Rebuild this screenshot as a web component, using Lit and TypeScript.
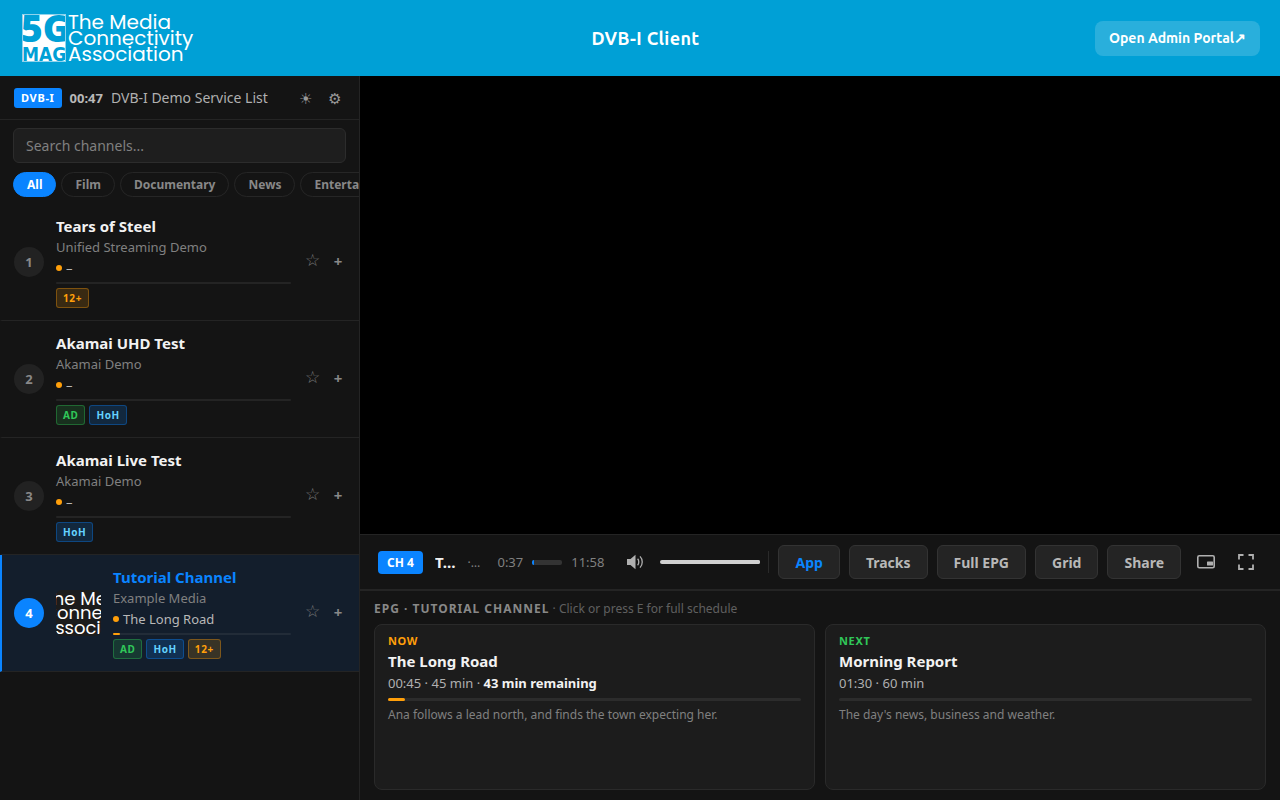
import { LitElement, html, css, nothing } from "lit";
import { customElement, property, state } from "lit/decorators.js";

interface Channel {
  num: number;
  name: string;
  provider: string;
  now: string;
  progress: number;
  tags: string[];
  logo?: boolean;
}

const CHANNELS: Channel[] = [
  { num: 1, name: "Tears of Steel", provider: "Unified Streaming Demo", now: "–", progress: 0, tags: ["12+"] },
  { num: 2, name: "Akamai UHD Test", provider: "Akamai Demo", now: "–", progress: 0, tags: ["AD", "HoH"] },
  { num: 3, name: "Akamai Live Test", provider: "Akamai Demo", now: "–", progress: 0, tags: ["HoH"] },
  { num: 4, name: "Tutorial Channel", provider: "Example Media", now: "The Long Road", progress: 4, tags: ["AD", "HoH", "12+"], logo: true },
];

const GENRES = ["All", "Film", "Documentary", "News", "Entertainment"];

const TAG_CLASS: Record<string, string> = { AD: "ad", HoH: "hoh", "12+": "age" };

@customElement("brand-logo")
class BrandLogo extends LitElement {
  static styles = css`
    :host { display: block; }
    svg { display: block; }
    .words { font-family: "Poppins", "Lato", sans-serif; font-size: 20px; fill: #fff; }
    .mark { font-family: "Open Sans", "Noto Sans", sans-serif; font-weight: 800; fill: #00a0d6; }
    .five { font-size: 37px; }
    .mag { font-family: "DejaVu Sans Condensed", "DejaVu Sans", sans-serif; font-weight: 700; font-size: 19px; }
  `;
  render() {
    return html`<svg width="176" height="50" viewBox="0 0 176 50" role="img" aria-label="5G-MAG The Media Connectivity Association">
      <rect x="2" y="1" width="44" height="48" fill="#fff" />
      <text class="mark five" x="1" y="29">5G</text>
      <text class="mark mag" x="2" y="48">MAG</text>
      <rect x="2.5" y="1.5" width="43" height="47" fill="none" stroke="#8fd3ec" />
      <text class="words" x="48" y="16">The Media</text>
      <text class="words" x="48" y="32">Connectivity</text>
      <text class="words" x="48" y="48">Association</text>
    </svg>`;
  }
}

@customElement("channel-row")
class ChannelRow extends LitElement {
  @property({ attribute: false }) channel!: Channel;
  @property({ type: Boolean }) selected = false;

  static styles = css`
    :host { display: block; }
    .row {
      display: flex; align-items: center; gap: 12px;
      padding: 12px 13px 12px 12px;
      border-left: 2px solid transparent;
      border-bottom: 1px solid #242424;
    }
    .row.on { background: #131e2c; border-left-color: #0a84ff; }
    .num {
      flex: none; width: 30px; height: 30px; border-radius: 50%;
      background: #222; color: #888; font-size: 13px; font-weight: 700;
      display: grid; place-items: center;
    }
    .on .num { background: #0a84ff; color: #fff; }
    .thumb { flex: none; width: 45px; height: 46px; border-radius: 6px; background: #1c1c1c; display: block; }
    .words { font-family: "Poppins", "Lato", sans-serif; font-size: 18px; fill: #fff; }
    .info { flex: 1; min-width: 0; }
    .name { font-size: 15px; font-weight: 700; line-height: 20px; color: #f2f2f2; }
    .on .name { color: #0a84ff; }
    .provider { font-size: 13px; line-height: 22px; color: #808080; }
    .now { display: flex; align-items: center; gap: 4px; font-size: 13px; line-height: 20px; color: #b8b8b8; }
    .dot { width: 6px; height: 6px; border-radius: 50%; background: #ff9f0a; }
    .track { height: 2px; margin: 4px 0; background: #242424; border-radius: 1px; }
    .on .track { background: #222c38; }
    .fill { height: 2px; background: #ff9f0a; border-radius: 1px; }
    .tags { display: flex; gap: 4px; }
    .tag {
      font-size: 10px; font-weight: 700; line-height: 18px; letter-spacing: 0.06em;
      padding: 0 6px; border: 1px solid; border-radius: 3px;
    }
    .ad { color: #30c759; background: rgba(48, 209, 88, 0.15); border-color: rgba(48, 209, 88, 0.35); }
    .hoh { color: #64d2ff; background: rgba(10, 132, 255, 0.18); border-color: rgba(10, 132, 255, 0.35); }
    .age { color: #ff9f0a; background: rgba(255, 159, 10, 0.16); border-color: rgba(255, 159, 10, 0.35); }
    .acts { display: flex; align-items: center; gap: 8px; }
    button {
      font: inherit; background: none; border: 0; padding: 0 0 2px; color: #777; cursor: pointer;
      text-align: center;
    }
    .star { width: 19px; padding-bottom: 4px; font-size: 17px; line-height: 24px; }
    .plus { width: 16px; font-size: 15px; line-height: 24px; font-weight: 700; color: #888; }
  `;

  render() {
    const c = this.channel;
    return html`<div class="row ${this.selected ? "on" : ""}">
      <div class="num">${c.num}</div>
      ${c.logo
        ? html`<svg class="thumb" viewBox="0 0 45 46" aria-hidden="true">
            <text class="words" x="-13" y="15">The Media</text>
            <text class="words" x="-13" y="29">Connectivity</text>
            <text class="words" x="-13" y="44">Association</text>
          </svg>`
        : nothing}
      <div class="info">
        <div class="name">${c.name}</div>
        <div class="provider">${c.provider}</div>
        <div class="now"><span class="dot"></span><span>${c.now}</span></div>
        <div class="track"><div class="fill" style="width:${c.progress}%"></div></div>
        <div class="tags">${c.tags.map((t) => html`<span class="tag ${TAG_CLASS[t]}">${t}</span>`)}</div>
      </div>
      <div class="acts">
        <button class="star" aria-label="Add ${c.name} to favourites">☆</button>
        <button class="plus" aria-label="Add ${c.name} to a list">+</button>
      </div>
    </div>`;
  }
}

@customElement("app-root")
class AppRoot extends LitElement {
  @state() private genre = "All";
  @state() private current = 4;

  static styles = css`
    :host {
      display: flex; flex-direction: column; height: 100vh; overflow: hidden;
      background: #141414; color: #f2f2f2;
      font-family: "Noto Sans", sans-serif;
    }
    * { box-sizing: border-box; }
    button, input { font-family: inherit; }
    button { cursor: pointer; }
    .top {
      flex: none; height: 76px; padding: 0 20px; background: #00a0d6;
      display: flex; justify-content: space-between; align-items: center;
      font-family: "Ubuntu", "Noto Sans", sans-serif;
    }
    .title { margin: 0; font-size: 18px; font-weight: 700; letter-spacing: 0.02em; color: #fff; }
    .portal {
      display: flex; padding: 0 14px; border-radius: 8px;
      background: rgba(255, 255, 255, 0.16); color: #fff; text-decoration: none;
      font-size: 14px; font-weight: 700; line-height: 35px;
    }
    .main { flex: 1; min-height: 0; display: grid; grid-template-columns: 360px 1fr; }
    .side { min-width: 0; border-right: 1px solid #242424; overflow: hidden; }
    .bar {
      display: flex; align-items: center; height: 44px; padding: 0 10px 0 14px;
      border-bottom: 1px solid #242424;
    }
    .badge {
      background: #0a84ff; color: #fff; border-radius: 3px; padding: 0 7px;
      font-size: 11px; font-weight: 700; line-height: 20px; letter-spacing: 0.06em;
    }
    .clock { margin-left: 8px; font-size: 13px; font-weight: 700; color: #b8b8b8; }
    .list { flex: 1; margin-left: 8px; font-size: 14px; color: #b0b0b0; }
    .tool { width: 29px; border: 0; padding: 0; background: none; color: #999; font-size: 15px; line-height: 24px; }
    .find { padding: 8px 13px 9px; }
    .search {
      display: block; width: 100%; height: 35px; padding: 0 12px;
      background: #1e1e1e; border: 1px solid #2c2c2c; border-radius: 6px;
      color: #f2f2f2; font-size: 14px;
    }
    .search::placeholder { color: #808080; }
    .chips { display: flex; gap: 5px; padding: 0 0 7px 13px; overflow: hidden; }
    .chip {
      flex: none; padding: 0 13px; border: 1px solid #262626; border-radius: 13px;
      background: none; color: #888; font-size: 12px; font-weight: 700; line-height: 23px;
    }
    .chip.on { background: #0a84ff; border-color: #0a84ff; color: #fff; }
    .stage { min-width: 0; display: flex; flex-direction: column; }
    .video { flex: 1; background: #000; }
    .controls {
      display: flex; align-items: center; height: 57px; padding: 0 14px 0 18px;
      border-top: 1px solid #242424; border-bottom: 2px solid #242424;
    }
    .playing { flex: 1 1 0; min-width: 0; display: flex; align-items: center; }
    .ch { flex: none; background: #0a84ff; color: #fff; border-radius: 4px; padding: 0 9px; font-size: 12px; font-weight: 700; line-height: 23px; }
    .what, .sub { overflow: hidden; white-space: nowrap; text-overflow: ellipsis; }
    .what { margin-left: 12px; min-width: 22px; font-size: 15px; font-weight: 700; }
    .sub { flex: 0 0 14px; margin-left: 9px; font-size: 12px; color: #808080; }
    .time { margin-left: 16px; display: flex; align-items: center; gap: 9px; font-size: 13px; color: #808080; }
    .seek { width: 30px; height: 5px; border-radius: 2px; background: #333; overflow: hidden; }
    .seekfill { height: 5px; background: #0a84ff; }
    .icon { flex: none; border: 0; padding: 0; background: none; width: 40px; height: 34px; display: grid; place-items: center; color: #b0b0b0; }
    .mute { margin-left: 11px; }
    .vol {
      appearance: none; flex: none; width: 100px; height: 4px; margin: 0 8px 0 5px;
      border-radius: 2px; background: #d0d0d0;
    }
    .vol::-webkit-slider-thumb { appearance: none; width: 4px; height: 4px; border-radius: 2px; background: #d0d0d0; }
    .rule { width: 1px; height: 22px; background: #2a2a2a; }
    .acts { display: flex; gap: 9px; margin: 0 5px 0 9px; }
    .act {
      height: 34px; padding: 0 16px; border: 1px solid #333; border-radius: 6px;
      background: #242424; color: #b8b8b8; font-size: 14px; font-weight: 700; white-space: nowrap;
    }
    .act.on { color: #0a84ff; }
    .epg { flex: none; padding: 9px 14px 10px; }
    .head { margin: 0 0 7px; font-size: 12px; font-weight: 400; line-height: 17px; color: #606060; }
    .head b { color: #888; letter-spacing: 1px; font-weight: 700; }
    .cards { display: grid; grid-template-columns: 1fr 1fr; gap: 10px; }
    .card { min-height: 166px; padding: 7px 13px; background: #1c1c1c; border: 1px solid #2a2a2a; border-radius: 8px; }
    .when { font-size: 11px; font-weight: 700; line-height: 18px; letter-spacing: 0.06em; color: #ff9f0a; }
    .when.next { color: #30c759; }
    .show { margin: 0; font-size: 15px; font-weight: 700; line-height: 22px; }
    .meta { font-size: 13px; line-height: 22px; color: #b0b0b0; }
    .meta b { color: #f2f2f2; font-weight: 700; }
    .ptrack { height: 3px; margin: 4px 0 5px; border-radius: 2px; background: #2c2c2c; }
    .pfill { height: 3px; border-radius: 2px; background: #ff9f0a; }
    .desc { margin: 0; font-size: 12px; line-height: 18px; color: #808080; }
  `;

  private card(kind: string, title: string, meta: unknown, pct: number, desc: string) {
    return html`<article class="card">
      <div class="when ${kind}">${kind.toUpperCase()}</div>
      <h3 class="show">${title}</h3>
      <div class="meta">${meta}</div>
      <div class="ptrack"><div class="pfill" style="width:${pct}%"></div></div>
      <p class="desc">${desc}</p>
    </article>`;
  }

  render() {
    return html`
      <header class="top">
        <brand-logo></brand-logo>
        <h1 class="title">DVB-I Client</h1>
        <a class="portal" href="#admin">Open Admin Portal↗</a>
      </header>
      <div class="main">
        <aside class="side">
          <div class="bar">
            <span class="badge">DVB-I</span>
            <span class="clock">00:47</span>
            <span class="list">DVB-I Demo Service List</span>
            <button class="tool" aria-label="Theme">☀</button>
            <button class="tool" aria-label="Settings">⚙</button>
          </div>
          <div class="find">
            <input class="search" type="text" aria-label="Search channels" placeholder="Search channels..." />
          </div>
          <div class="chips">
            ${GENRES.map((g) => html`<button class="chip ${g === this.genre ? "on" : ""}" @click=${() => (this.genre = g)}>${g}</button>`)}
          </div>
          ${CHANNELS.map((c) => html`<channel-row .channel=${c} ?selected=${c.num === this.current} @click=${() => (this.current = c.num)}></channel-row>`)}
        </aside>
        <main class="stage">
          <div class="video"></div>
          <div class="controls">
            <div class="playing">
              <span class="ch">CH 4</span>
              <span class="what">Tutorial Channel</span>
              <span class="sub">· The Long Road</span>
            </div>
            <div class="time">
              <span>0:37</span>
              <div class="seek"><div class="seekfill" style="width:5%"></div></div>
              <span>11:58</span>
            </div>
            <button class="icon mute" aria-label="Mute">
              <svg width="18" height="18" viewBox="0 0 18 18" fill="none" stroke="currentColor" stroke-width="1.3">
                <path d="M1 6h3.500L9.500 1.800v14.400L4.500 12H1z" fill="currentColor" stroke="none" />
                <path d="M11.600 5.800c1.600 1.600 1.600 4.800 0 6.400M14 3.400c3 3 3 8.200 0 11.200" />
              </svg>
            </button>
            <input class="vol" type="range" min="0" max="100" value="100" aria-label="Volume" />
            <span class="rule"></span>
            <div class="acts">
              ${["App", "Tracks", "Full EPG", "Grid", "Share"].map((a) => html`<button class="act ${a === "App" ? "on" : ""}">${a}</button>`)}
            </div>
            <button class="icon" aria-label="Picture in picture">
              <svg width="18" height="14" viewBox="0 0 18 14">
                <rect x="0.8" y="0.8" width="16.400" height="12" rx="1.500" fill="none" stroke="currentColor" stroke-width="1.6" />
                <rect x="10" y="6.500" width="6" height="4" rx="0.500" fill="currentColor" />
              </svg>
            </button>
            <button class="icon" aria-label="Full screen">
              <svg width="16" height="16" viewBox="0 0 16 16" fill="none" stroke="currentColor" stroke-width="1.8">
                <path d="M1 5.500V1h4.500M10.500 1H15v4.500M15 10.500V15h-4.500M5.500 15H1v-4.500" />
              </svg>
            </button>
          </div>
          <section class="epg">
            <h2 class="head"><b>EPG · TUTORIAL CHANNEL</b> · Click or press E for full schedule</h2>
            <div class="cards">
              ${this.card("now", "The Long Road", html`00:45 · 45 min · <b>43 min remaining</b>`, 4.2, "Ana follows a lead north, and finds the town expecting her.")}
              ${this.card("next", "Morning Report", "01:30 · 60 min", 0, "The day's news, business and weather.")}
            </div>
          </section>
        </main>
      </div>
    `;
  }
}
